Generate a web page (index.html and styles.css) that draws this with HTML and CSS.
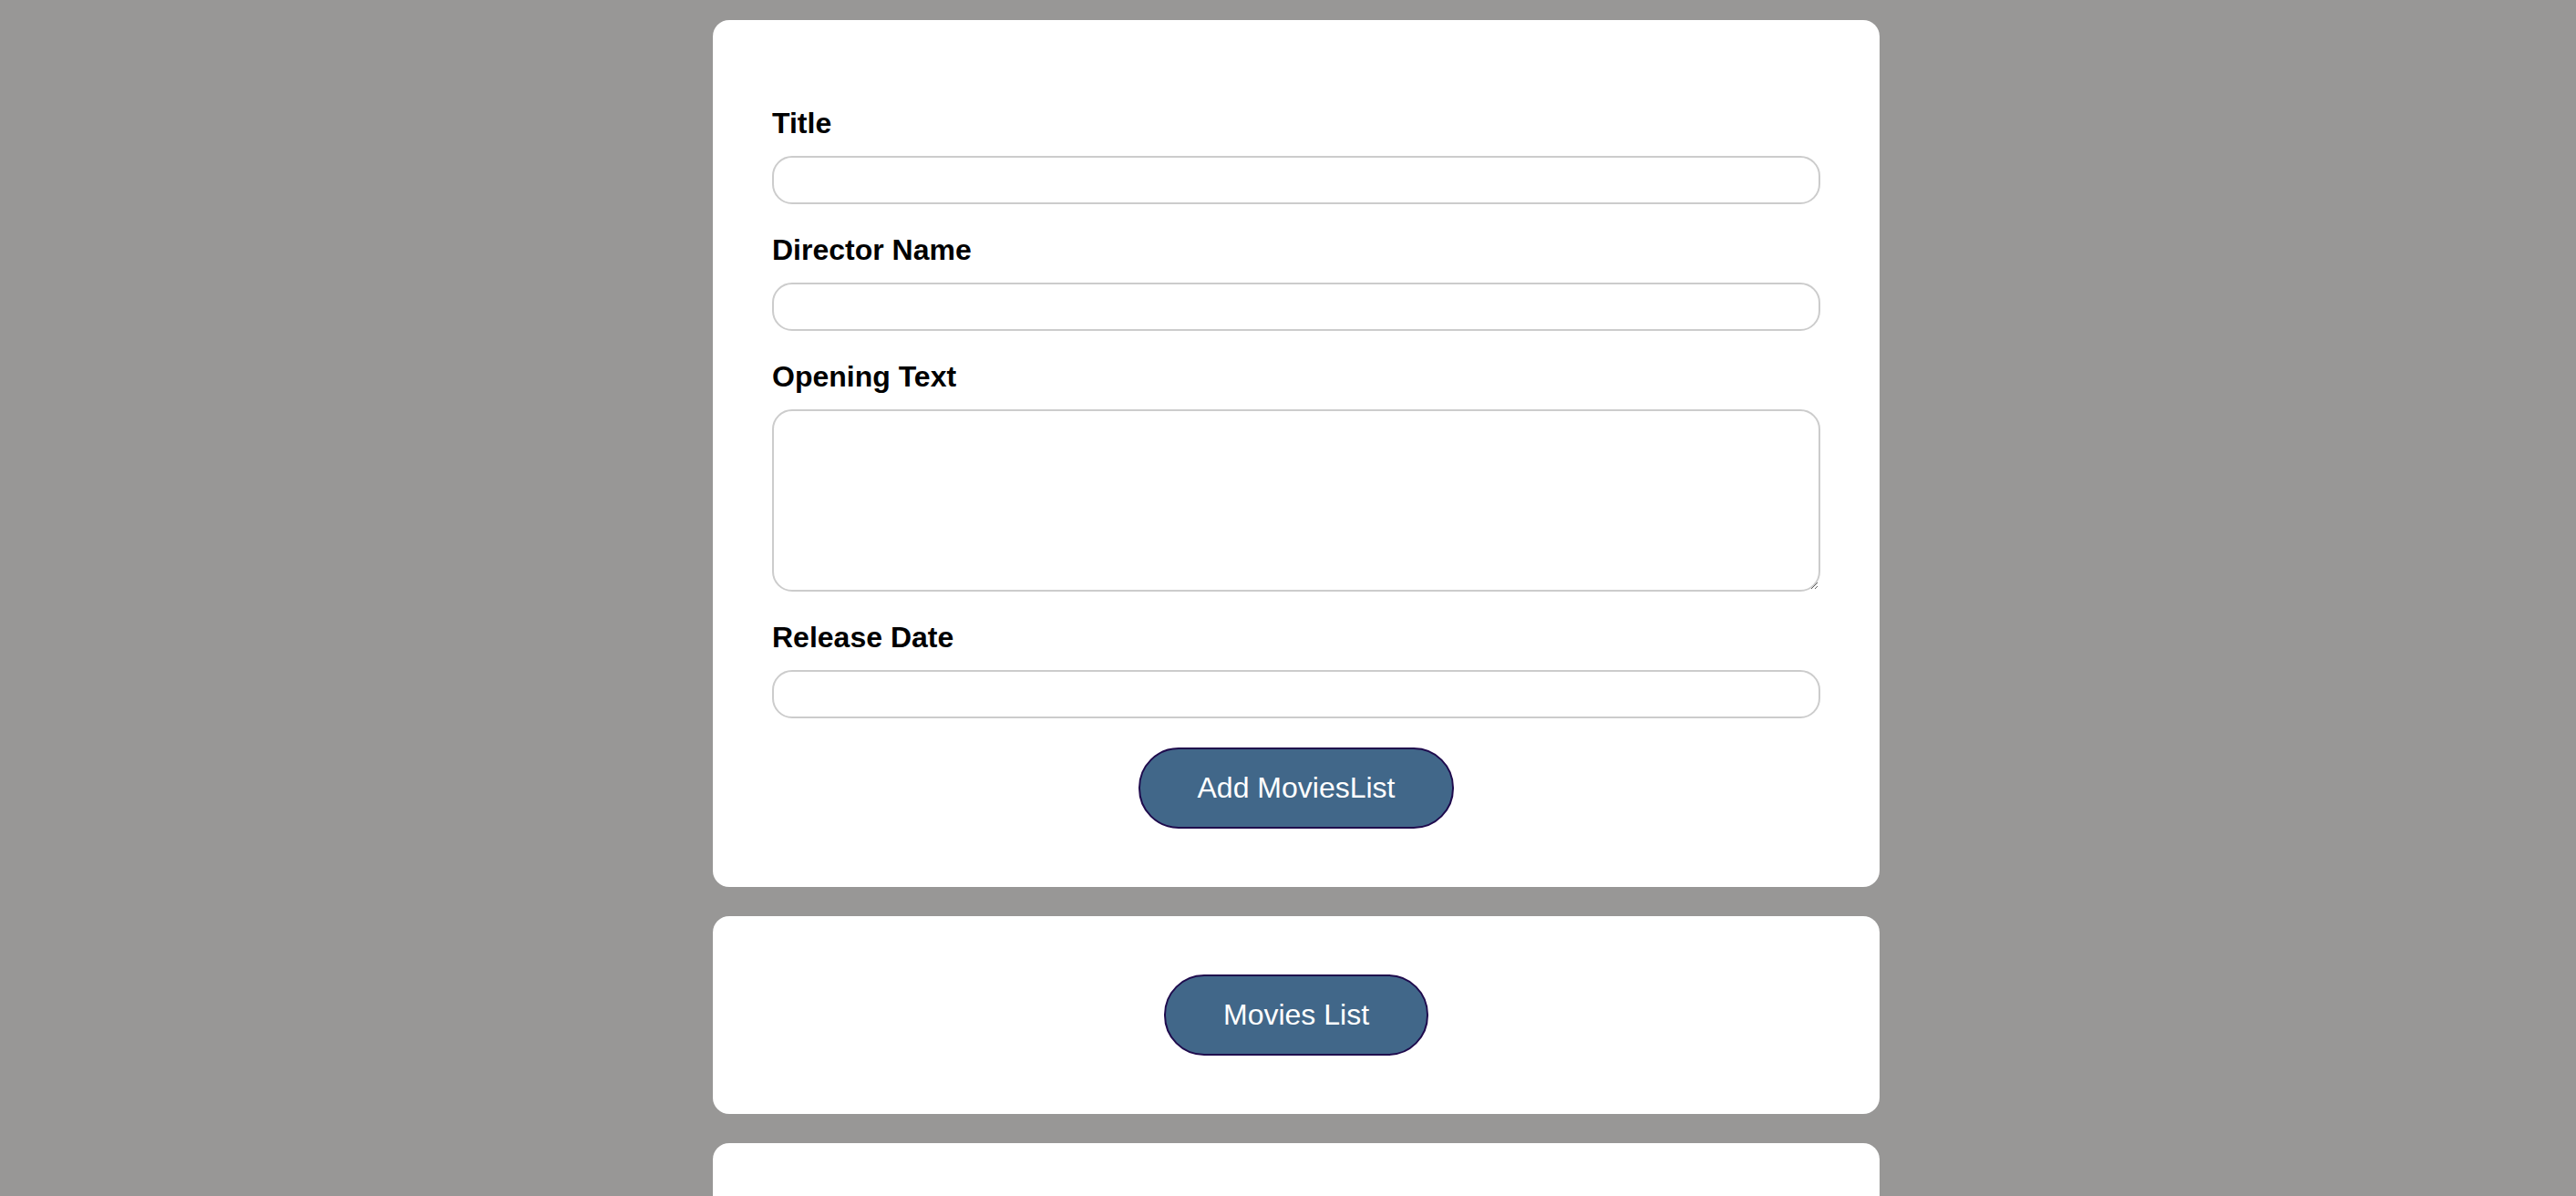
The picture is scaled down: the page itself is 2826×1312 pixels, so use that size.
FILE: index.html
```html
<!DOCTYPE html>
<html lang="en">
<head>
<meta charset="utf-8">
<title>Movies</title>
<link rel="stylesheet" href="styles.css">
</head>
<body>
  <main class="page">
    <section class="card card-form">
      <form class="movie-form">
        <div class="control">
          <label for="title">Title</label>
          <input id="title" type="text">
        </div>
        <div class="control">
          <label for="director">Director Name</label>
          <input id="director" type="text">
        </div>
        <div class="control">
          <label for="opening">Opening Text</label>
          <textarea id="opening"></textarea>
        </div>
        <div class="control">
          <label for="date">Release Date</label>
          <input id="date" type="text">
        </div>
        <div class="actions">
          <button type="button" class="btn">Add MoviesList</button>
        </div>
      </form>
    </section>
    <section class="card card-center">
      <button type="button" class="btn">Movies List</button>
    </section>
    <section class="card card-tall"></section>
  </main>
</body>
</html>
```
FILE: styles.css
```css
html, body {
  margin: 0;
  height: 100%;
  overflow: hidden;
}

body {
  background: #989796;
  font-family: "Liberation Sans", Arial, sans-serif;
  color: #000;
}

.page {
  padding: 22px 0 0 18px;
}

.card {
  box-sizing: border-box;
  width: 1280px;
  margin: 0 auto 32px;
  padding: 64px 65px;
  background: #fff;
  border-radius: 18px;
}

.card-form {
  padding-top: 63px;
  padding-bottom: 64px;
}

.control {
  margin: 32px 0;
}

.control label {
  display: block;
  font-size: 32px;
  font-weight: bold;
  line-height: normal;
  margin-bottom: 17px;
}

.control input,
.control textarea {
  display: block;
  box-sizing: border-box;
  width: 100%;
  height: 53px;
  margin: 0;
  border: 2px solid #cccccc;
  border-radius: 22px;
  background: #fff;
  font: inherit;
  font-size: 28px;
  padding: 4px 16px;
  outline: none;
}

.control textarea {
  height: 200px;
  resize: vertical;
}

.actions {
  text-align: center;
}

.card-center {
  text-align: center;
}

.btn {
  font-family: "Liberation Sans", Arial, sans-serif;
  font-size: 32px;
  line-height: normal;
  color: #fff;
  background: #416789;
  border: 2px solid #1f0b4d;
  border-radius: 44px;
  padding: 24px 63px;
  cursor: pointer;
}

.card-tall {
  height: 300px;
}
```
